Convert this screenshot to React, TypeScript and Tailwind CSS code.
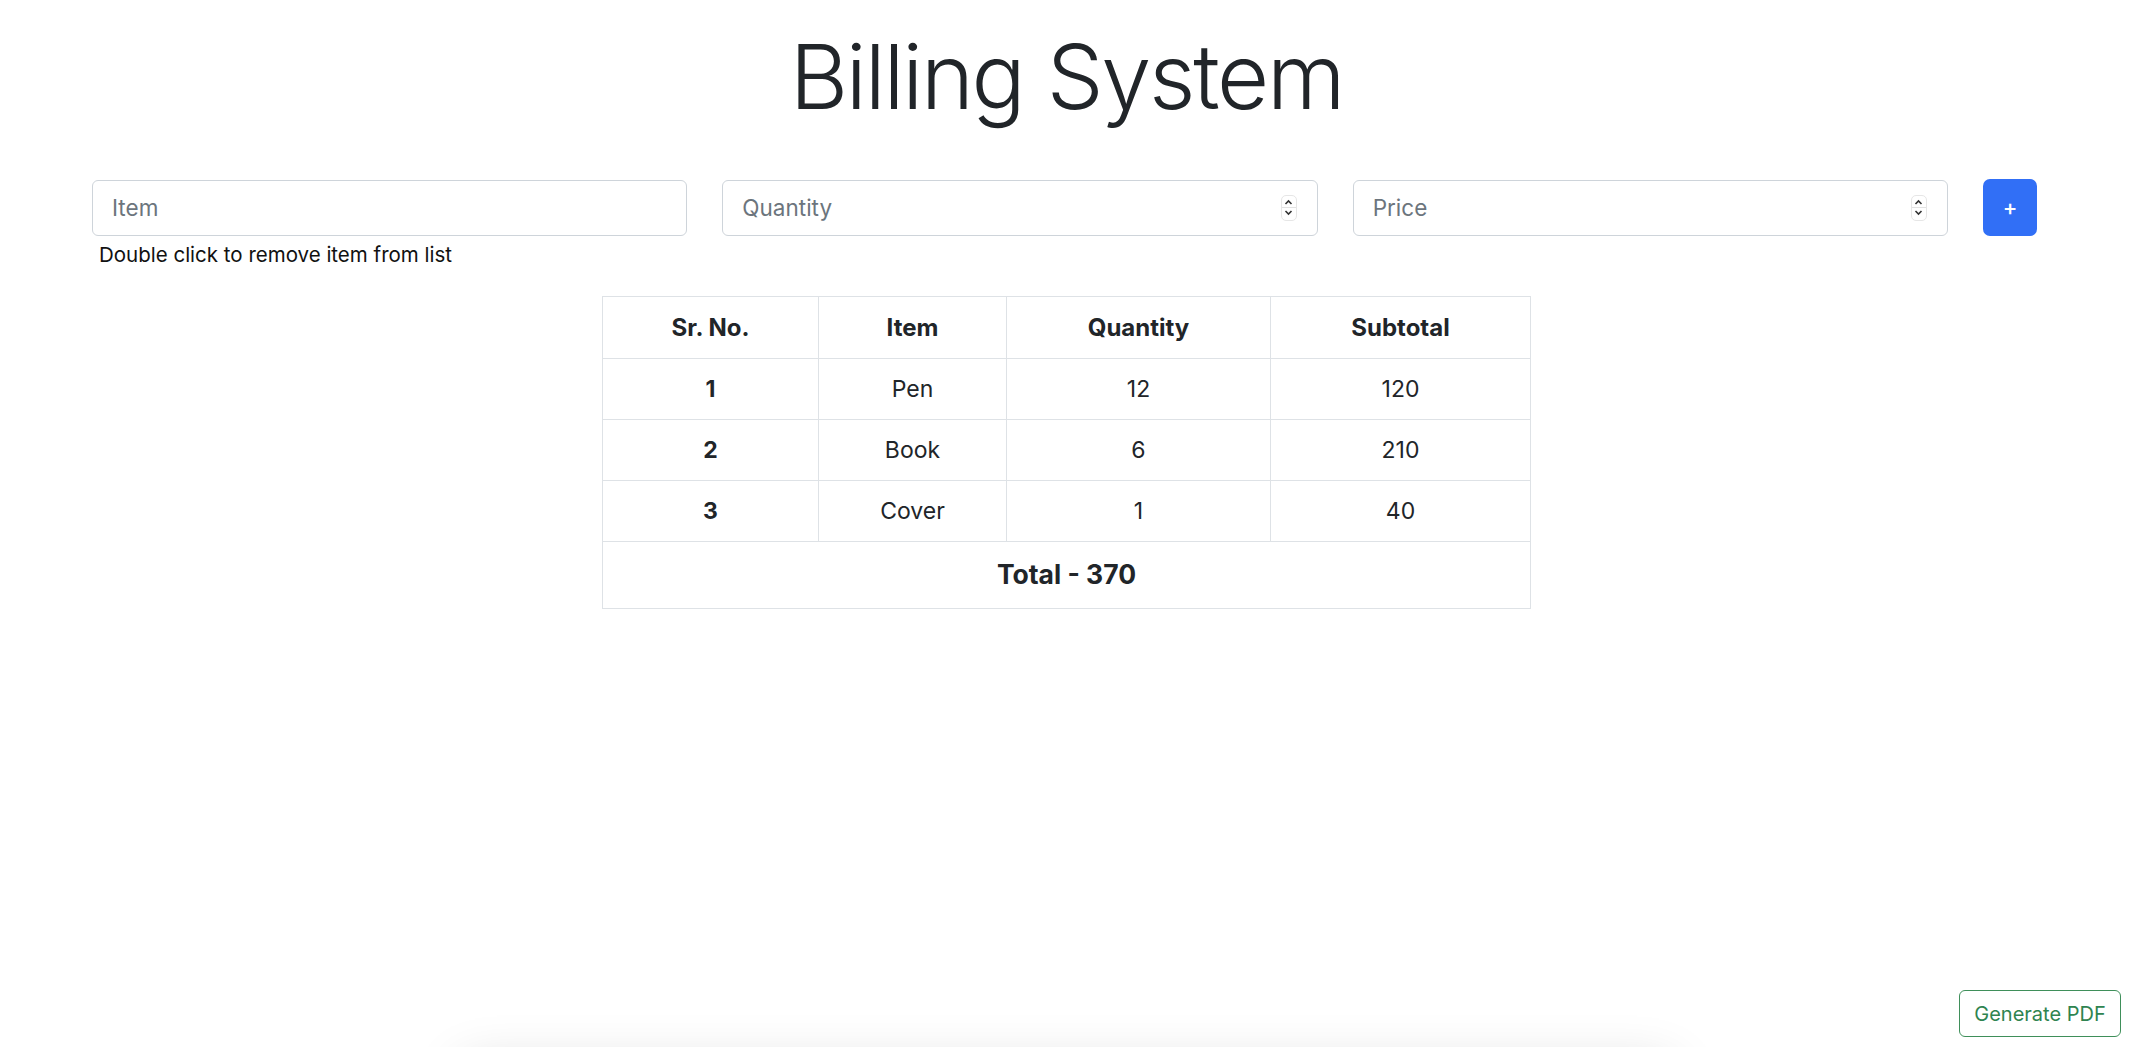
import * as React from "react";

const rows = [
  { no: 1, item: "Pen", qty: 12, subtotal: 120 },
  { no: 2, item: "Book", qty: 6, subtotal: 210 },
  { no: 3, item: "Cover", qty: 1, subtotal: 40 },
];

function Spinner() {
  return (
    <div className="flex h-[26px] w-[16px] flex-col items-center justify-center rounded-[5px] border border-[#e6e6e6] bg-white">
      <svg width="9" height="7" viewBox="0 0 9 7" className="mb-[1px]">
        <path d="M1.5 5 L4.5 2 L7.5 5" fill="none" stroke="#333" strokeWidth="1.6" />
      </svg>
      <div className="h-px w-full bg-[#e2e2e2]" />
      <svg width="9" height="7" viewBox="0 0 9 7" className="mt-[1px]">
        <path d="M1.5 2 L4.5 5 L7.5 2" fill="none" stroke="#333" strokeWidth="1.6" />
      </svg>
    </div>
  );
}

function Field({ placeholder, number }: { placeholder: string; number?: boolean }) {
  return (
    <div className="flex h-[56px] flex-1 items-center rounded-[6px] border border-[#ced4da] bg-white pl-[19px] pr-[20px]">
      <input
        type="text"
        placeholder={placeholder}
        className="min-w-0 flex-1 bg-transparent text-[22.5px] text-[#212529] outline-none placeholder:text-[#6c757d]"
      />
      {number && <Spinner />}
    </div>
  );
}

export default function App() {
  const total = rows.reduce((sum, r) => sum + r.subtotal, 0);

  return (
    <div
      className="min-h-screen bg-white text-[#212529]"
      style={{ fontFamily: "Inter, 'Noto Sans', sans-serif" }}
    >
      <h1 className="pt-[22px] text-center text-[90px] font-light leading-[110px] tracking-[-0.025em]">
        Billing System
      </h1>

      <div className="mt-[47px] pl-[92px] pr-[96px]">
        <div className="flex items-center gap-[35px]">
          <Field placeholder="Item" />
          <Field placeholder="Quantity" number />
          <Field placeholder="Price" number />
          <button className="flex h-[57px] w-[54px] items-center justify-center rounded-[7px] bg-[#316ff6] text-[22px] font-medium text-white">
            +
          </button>
        </div>
        <p className="mt-[4px] pl-[7px] text-[20.5px] leading-[30px] text-[#111]">
          Double click to remove item from list
        </p>
      </div>

      <div className="mt-[26px] flex justify-center">
        <table className="w-[929px] border-collapse text-center text-[23px]">
          <thead>
            <tr className="h-[62px]">
              <th className="w-[216px] border border-[#dee2e6] text-[24px] font-bold">Sr. No.</th>
              <th className="w-[188px] border border-[#dee2e6] text-[24px] font-bold">Item</th>
              <th className="w-[264px] border border-[#dee2e6] text-[24px] font-bold">Quantity</th>
              <th className="border border-[#dee2e6] text-[24px] font-bold">Subtotal</th>
            </tr>
          </thead>
          <tbody>
            {rows.map((r) => (
              <tr key={r.no} className="h-[61px]" onDoubleClick={() => {}}>
                <td className="border border-[#dee2e6] font-bold">{r.no}</td>
                <td className="border border-[#dee2e6]">{r.item}</td>
                <td className="border border-[#dee2e6]">{r.qty}</td>
                <td className="border border-[#dee2e6]">{r.subtotal}</td>
              </tr>
            ))}
            <tr className="h-[67px]">
              <td colSpan={4} className="border border-[#dee2e6] text-[26.5px] font-bold">
                Total - {total}
              </td>
            </tr>
          </tbody>
        </table>
      </div>

      {/* shadow of the pdf sheet sitting below the fold */}
      <div className="pointer-events-none fixed left-1/2 top-[1066px] h-[400px] w-[1210px] -translate-x-1/2 bg-white shadow-[0_0_50px_rgba(0,0,0,0.16)]" />

      <button className="fixed bottom-[10px] right-[12px] h-[47px] w-[162px] rounded-[6px] border border-[#3f8f5a] bg-white text-[20px] text-[#2f8450]">
        Generate PDF
      </button>
    </div>
  );
}
